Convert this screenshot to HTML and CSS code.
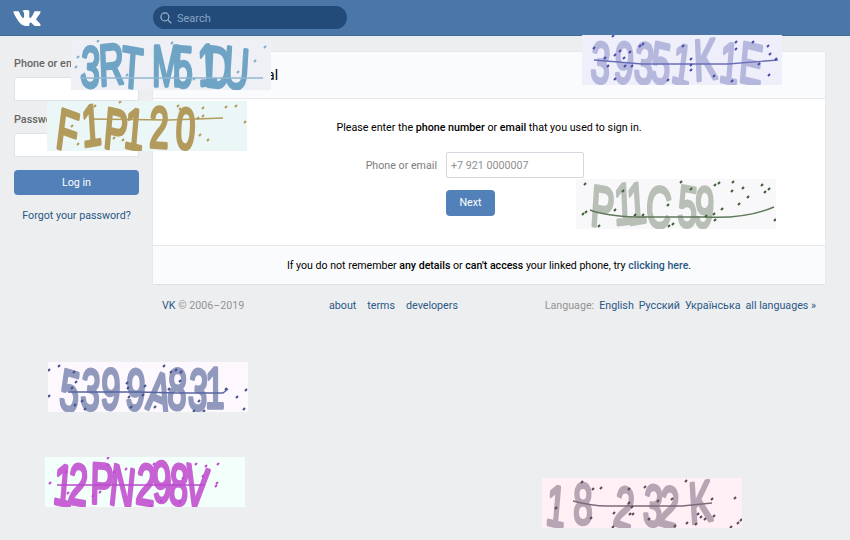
FILE: index.html
```html
<!DOCTYPE html>
<html lang="en">
<head>
<meta charset="utf-8">
<title>VK</title>
<link rel="stylesheet" href="styles.css">
</head>
<body>
<header class="topbar">
  <svg class="logo" viewBox="0 5 24 14" aria-label="VK"><path d="M13.162 18.994c.609 0 .858-.406.851-.915-.031-1.917.714-2.949 2.059-1.604 1.488 1.488 1.796 2.519 3.603 2.519h3.2c.808 0 1.126-.26 1.126-.668 0-.863-1.421-2.386-2.625-3.504-1.686-1.565-1.765-1.602-.313-3.486 1.801-2.339 4.157-5.336 2.073-5.336h-3.981c-.772 0-.828.435-1.103 1.083-.995 2.347-2.886 5.387-3.604 4.922-.751-.485-.407-2.406-.35-5.261.015-.754.011-1.271-1.141-1.539-.629-.145-1.241-.205-1.809-.205-2.273 0-3.841.953-2.95 1.119 1.571.293 1.42 3.692 1.054 5.16-.638 2.556-3.036-2.024-4.035-4.305-.241-.548-.315-.974-1.175-.974h-3.255c-.492 0-.787.16-.787.516 0 .602 2.96 6.72 5.786 9.77 2.756 2.975 5.48 2.708 7.376 2.708z"/></svg>
  <div class="search">
    <svg class="search-icon" viewBox="0 0 13 13"><circle cx="5.3" cy="5.3" r="4.3"/><path d="M8.5 8.5l3.7 3.7"/></svg>
    <span class="search-text">Search</span>
  </div>
</header>

<div class="page">
  <aside class="side">
    <label class="side-label">Phone or email</label>
    <div class="field"></div>
    <label class="side-label side-label-next">Password</label>
    <div class="field"></div>
    <button class="btn btn-wide">Log in</button>
    <a class="forgot">Forgot your password?</a>
  </aside>

  <main class="main">
    <section class="card">
      <h1 class="card-head">Account retrieval</h1>
      <div class="card-body">
        <p class="intro">Please enter the <b>phone number</b> or <b>email</b> that you used to sign in.</p>
        <div class="row">
          <span class="row-label">Phone or email</span>
          <div class="phone-input">+7 921 0000007</div>
        </div>
        <div class="row row-btn">
          <span class="row-label"></span>
          <button class="btn btn-next">Next</button>
        </div>
      </div>
      <div class="card-foot">If you do not remember <b>any details</b> or <b>can't access</b> your linked phone, try <a class="strong-link">clicking here</a>.</div>
    </section>
    <footer class="foot">
      <div class="copy"><a>VK</a> © 2006–2019</div>
      <nav class="foot-links"><a>about</a><a>terms</a><a>developers</a></nav>
      <div class="langs"><span>Language:</span><a>English</a><a>Русский</a><a>Українська</a><a>all languages »</a></div>
    </footer>
  </main>
</div>

<svg class="cap cap1" viewBox="0 0 200 50"><g class="glyphs"><text x="15 48 82 135 170 213 223 253" y="46" rotate="4 -4 6 0 3 -4 4 6">3RTM51DU</text></g><path class="strike" d="M9 38 H192"/><path class="specks" d="M6 18l2-2M12 35l2-2M26 2l2-2M55 36l2-2M90 28l2-2M100 4l2-2M122 40l2-2M155 36l2-2M166 33l2-2M150 40l2-2M172 17l2-2M183 22l2-2M193 8l2-2M4 28l2-2"/></svg>
<svg class="cap cap2" viewBox="0 0 200 50"><g class="glyphs"><text x="13 60 93 127 170 213" y="46" rotate="12 -6 8 8 2 6">F1P120</text></g><path class="strike" d="M42 18 L122 19 L176 17"/><path class="specks" d="M15 10l2-2M47 6l2-2M24 26l2-2M66 38l2-2M75 40l2-2M130 6l2-2M132 9l2-2M150 18l2-2M155 16l2-2M155 8l2-2M178 7l2-2M188 6l2-2M152 35l2-2M160 40l2-2M197 22l2-2M72 2l2-2M30 44l2-2"/></svg>
<svg class="cap cap3" viewBox="0 0 200 50"><g class="glyphs"><text x="13 52 85 113 147 188 227 260" y="46" rotate="6 6 8 8 12 -4 8 8">39351K1E</text></g><path class="strike" d="M12 25 L60 29 H146 L196 25"/><path class="specks" d="M11 14l2-2M30 2l2-2M22 24l2-2M25 32l2-2M32 21l2-2M37 17l2-2M41 24l2-2M47 18l2-2M49 32l2-2M42 32l2-2M57 12l2-2M60 10l2-2M85 46l2-2M32 45l2-2M100 12l2-2M108 25l2-2M108 31l2-2M108 36l2-2M131 42l2-2M149 47l2-2M153 8l2-2M153 15l2-2M170 8l2-2M176 30l2-2M185 12l2-2M187 20l2-2M193 25l2-2M186 41l2-2"/></svg>
<svg class="cap cap4" viewBox="0 0 200 50"><g class="glyphs"><text x="23 65 87 115 168 195" y="46" rotate="6 -4 -6 6 6 8">P11C59</text></g><path class="strike" d="M14 31 Q30 37 60 38 H130 Q170 40 198 28"/><path class="specks" d="M8 6l2-2M6 36l2-2M9 34l2-2M22 48l2-2M46 13l2-2M38 32l2-2M58 37l2-2M66 37l2-2M91 27l2-2M104 4l2-2M114 11l2-2M92 48l2-2M96 46l2-2M138 7l2-2M142 5l2-2M156 4l2-2M155 13l2-2M166 10l2-2M162 26l2-2M171 19l2-2M185 7l2-2M192 11l2-2M188 14l2-2M129 38l2-2M137 36l2-2M145 31l2-2M138 42l2-2M198 42l2-2"/></svg>
<svg class="cap cap5" viewBox="0 0 200 50"><g class="glyphs"><text x="17 53 87 128 162 198 232 262" y="46" rotate="10 6 4 6 14 4 6 0">5399A831</text></g><path class="strike" d="M20 30 H90 L130 31 H175 L180 27"/><path class="specks" d="M0 9l2-2M10 5l2-2M25 11l2-2M27 21l2-2M0 35l2-2M23 27l2-2M26 44l2-2M33 40l2-2M36 48l2-2M80 36l2-2M78 22l2-2M79 27l2-2M82 46l2-2M96 25l2-2M94 34l2-2M106 46l2-2M115 5l2-2M120 28l2-2M122 11l2-2M127 9l2-2M132 11l2-2M131 20l2-2M150 40l2-2M145 50l2-2M155 50l2-2M177 28l2-2M188 36l2-2M197 29l2-2M195 48l2-2"/></svg>
<svg class="cap cap6" viewBox="0 0 200 50"><g class="glyphs"><text x="12 37 75 105 150 180 205 230" y="46" rotate="8 6 2 10 6 -4 6 10">12PN298V</text></g><path class="strike" d="M12 28 H160"/><path class="specks" d="M4 27l2-2M20 16l2-2M22 37l2-2M47 40l2-2M54 36l2-2M62 2l2-2M62 9l2-2M68 16l2-2M80 13l2-2M108 8l2-2M105 50l2-2M115 45l2-2M134 46l2-2M137 22l2-2M150 8l2-2M160 10l2-2M157 20l2-2M172 8l2-2M170 30l2-2M171 27l2-2"/></svg>
<svg class="cap cap7" viewBox="0 0 200 50"><g class="glyphs"><text x="5 52 117 167 192 247" y="46" rotate="8 0 12 6 10 -6">18232K</text></g><path class="strike" d="M31 23 Q50 28 65 28 H140 L170 25"/><path class="specks" d="M13 31l2-2M39 5l2-2M50 12l2-2M58 11l2-2M48 41l2-2M70 50l2-2M71 36l2-2M86 12l2-2M86 26l2-2M89 30l2-2M87 37l2-2M90 37l2-2M102 10l2-2M106 42l2-2M115 24l2-2M129 22l2-2M132 49l2-2M143 4l2-2M144 46l2-2M153 47l2-2M155 37l2-2M158 40l2-2M162 42l2-2M171 39l2-2M169 22l2-2M188 50l2-2M195 46l2-2M198 43l2-2M192 21l2-2"/></svg>
</body>
</html>
```

FILE: styles.css
```css
* { box-sizing: border-box; }
html, body { height: 100%; }
body {
  margin: 0;
  background: #edeef0;
  font-family: Roboto, "Liberation Sans", sans-serif;
  font-size: 10.7px;
  line-height: 16px;
  color: #000;
  overflow: hidden;
  position: relative;
}
a { color: #2a5885; }
b { font-weight: 500; }

.topbar {
  height: 36px;
  background: #4a76a8;
  border-bottom: 1px solid #426a97;
  display: flex;
  align-items: center;
}
.logo { width: 28px; height: 16px; margin-left: 13px; fill: #fff; flex: none; }
.search {
  margin-left: 112px;
  width: 194px;
  height: 23px;
  border-radius: 12px;
  background: #224b7a;
  color: #8aa5c5;
  display: flex;
  align-items: center;
  padding-left: 7px;
  gap: 5px;
  font-size: 11px;
}
.search-text { padding-top: 2px; }
.search-icon { width: 12px; height: 12px; fill: none; stroke: #a0b6ce; stroke-width: 1.3; }

.page { display: flex; padding: 16px 25px 0 14px; gap: 14px; }

.side { width: 125px; flex: none; display: flex; flex-direction: column; padding-top: 4px; }
.side-label { font-weight: 500; color: #656565; font-size: 10.8px; height: 16px; white-space: nowrap; margin-bottom: 5px; }
.side-label-next { margin-top: 11px; }
.field { height: 24px; background: #fff; border: 1px solid #dfe2e8; border-radius: 2px; }
.btn {
  background: #5181b8;
  color: #fff;
  border: 0;
  border-radius: 4px;
  font: inherit;
  height: 26px;
  padding: 0;
}
.btn-wide { width: 125px; height: 25px; margin-top: 13px; flex: none; }
.btn-next { width: 49px; }
.forgot { text-align: center; margin-top: 13px; white-space: nowrap; }

.main { width: 672px; flex: none; }
.card {
  background: #fff;
  border-radius: 2px;
  box-shadow: 0 1px 0 #dcdfe4, 0 0 0 1px #e7e8ec;
}
.card-head {
  margin: 0;
  height: 47px;
  background: #fafbfc;
  border-bottom: 1px solid #e7e8ec;
  font-size: 14px;
  font-weight: 400;
  line-height: 46px;
  padding-left: 20px;
  color: #000;
}
.card-body { height: 146px; display: flex; flex-direction: column; padding-top: 21px; }
.intro { margin: 0; text-align: center; height: 16px; }
.row { display: flex; align-items: center; gap: 9px; margin-top: 16px; }
.row-btn { margin-top: 12px; }
.row-label { width: 284px; text-align: right; color: #7d7d7d; flex: none; margin-top: 2px; }
.phone-input {
  width: 138px;
  height: 26px;
  background: #fff;
  border: 1px solid #d3d9de;
  border-radius: 2px;
  color: #8f8f8f;
  padding: 5px 4px 0;
}
.card-foot {
  height: 39px;
  background: #fafbfc;
  border-top: 1px solid #e7e8ec;
  text-align: center;
  line-height: 40px;
  font-size: 10.6px;
}
.strong-link { font-weight: 500; }

.foot { display: flex; padding: 12px 9px 0; position: relative; height: 32px; align-items: center; }
.copy { width: 167px; flex: none; color: #939393; }
.foot-links { display: flex; gap: 11px; }
.langs { margin-left: auto; display: flex; gap: 5px; color: #939393; }

.cap { position: absolute; width: 200px; height: 50px; overflow: hidden; }
.cap text { font-family: "Liberation Sans", sans-serif; font-weight: 400; font-size: 58px; stroke-width: 3.5; stroke-linejoin: round; }
.glyphs { transform: scale(.6, 1); filter: blur(.6px); }
.strike { fill: none; stroke-width: 1.4; }
.specks { fill: none; stroke-width: 2; }

.cap1 { left: 71px; top: 40px; background: #eff0f6; }
.cap1 text { fill: #6fa4c5; stroke: #6fa4c5; }
.cap1 .strike { stroke: #8fb6d2; }
.cap1 .specks { stroke: #7fadc9; }

.cap2 { left: 47px; top: 101px; background: #ebf6f7; }
.cap2 text { fill: #b29b5c; stroke: #b29b5c; }
.cap2 .strike { stroke: #b29b5c; }
.cap2 .specks { stroke: #b29b5c; }

.cap3 { left: 582px; top: 35px; background: #eeeffb; }
.cap3 text { fill: #b5b8dc; stroke: #b5b8dc; }
.cap3 .strike { stroke: #6a6db8; }
.cap3 .specks { stroke: #4a4aa8; }

.cap4 { left: 576px; top: 179px; background: #f8f7f9; }
.cap4 text { fill: #b8bfb6; stroke: #b8bfb6; }
.cap4 .strike { stroke: #5f7a5a; }
.cap4 .specks { stroke: #3f5f3a; }

.cap5 { left: 48px; top: 362px; background: #fdf8fe; }
.cap5 text { fill: #9199bd; stroke: #9199bd; }
.cap5 .strike { stroke: #5566a0; }
.cap5 .specks { stroke: #44508f; }

.cap6 { left: 45px; top: 457px; background: #f3fffa; }
.cap6 text { fill: #c662d4; stroke: #c662d4; }
.cap6 .strike { stroke: #b84ccb; }
.cap6 .specks { stroke: #c04ad2; }

.cap7 { left: 542px; top: 478px; background: #fff0f5; }
.cap7 text { fill: #b6a6b4; stroke: #b6a6b4; }
.cap7 .strike { stroke: #7d6a7a; }
.cap7 .specks { stroke: #5a4a58; }
```
